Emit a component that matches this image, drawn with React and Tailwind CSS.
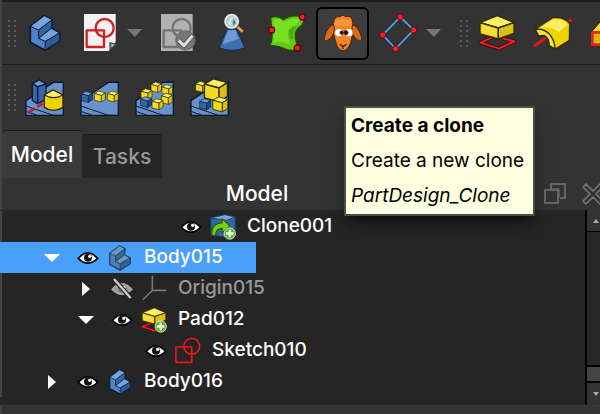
import { useState } from "react";

const iconProps = {
  viewBox: "0 0 120 120",
  className: "size-10 overflow-visible",
  strokeLinejoin: "round",
  "aria-hidden": true,
};

const Grip = () => (
  <div className="grid w-2 shrink-0 grid-cols-2 gap-x-1 gap-y-[3px]">
    {Array.from({ length: 12 }, (_, i) => (
      <span key={i} className="size-[2px] rounded-full bg-[#6a6a6a]" />
    ))}
  </div>
);

const BodyIcon = ({ small, muted }) => (
  <svg
    {...iconProps}
    className={small ? "size-7" : "size-10"}
    stroke={muted ? "#1d3a5c" : "#0b1a30"}
    strokeWidth="5"
  >
    <path d="M16 40L58 8L82 20L79 46L104 60V84L60 112L16 88Z" fill={muted ? "#4d7fb5" : "#4d84c6"} />
    <path d="M16 40L58 8L82 20L41 51Z" fill={muted ? "#6a95c0" : "#74a5de"} strokeWidth="3" />
    <path d="M41 51L82 20L79 46L41 76Z" fill={muted ? "#3b6898" : "#3465a4"} strokeWidth="3" />
    <path d="M41 76L79 46L104 60L61 85Z" fill={muted ? "#6a95c0" : "#74a5de"} strokeWidth="3" />
    <path d="M61 85L104 60V84L60 112Z" fill={muted ? "#35618f" : "#2f5c98"} strokeWidth="3" />
  </svg>
);

const SketchIcon = () => (
  <svg {...iconProps}>
    <path d="M12 3H107V86L86 114H12Z" fill="#f3f3f2" />
    <path d="M88 86L111 93L88 112Z" fill="#55574f" />
    <path d="M94 92L103 95L94 103Z" fill="#c5c7be" />
    <g fill="none" stroke="#da1c20" strokeWidth="7">
      <rect x="20" y="52" width="52" height="50" />
      <circle cx="74" cy="45" r="27" />
    </g>
  </svg>
);

const ValidateIcon = () => (
  <svg {...iconProps}>
    <path d="M12 3H107V114H12Z" fill="#b1b1b1" />
    <g fill="none" stroke="#747474" strokeWidth="7">
      <rect x="20" y="52" width="52" height="50" />
      <circle cx="74" cy="45" r="27" />
    </g>
    <circle cx="85" cy="82" r="29" fill="#777" stroke="#686868" strokeWidth="3" />
    <path d="M65 82L81 98L106 68" fill="none" stroke="#555" strokeWidth="15" />
    <path d="M65 82L81 98L106 68" fill="none" stroke="#ddd" strokeWidth="9" />
  </svg>
);

const CheckGeometryIcon = () => (
  <svg {...iconProps}>
    <path d="M45 48H74L99 105Q60 119 21 105Z" fill="#3e70b2" stroke="#17315a" strokeWidth="4" />
    <path d="M49 52H70L80 77Q54 85 32 94Z" fill="#6f9cd3" />
    <path d="M76 42L92 57" stroke="#be7a25" strokeWidth="9" />
    <path d="M78 42L92 55" stroke="#efb64c" strokeWidth="5" />
    <circle cx="59" cy="25" r="20" fill="#b6cfd4" stroke="#e7eaea" strokeWidth="5" />
    <path d="M49 30Q51 10 67 13Q51 23 57 40Z" fill="#e3eee9" />
    <path d="M64 18L72 30L64 38Q59 29 64 18Z" fill="#568b5e" />
  </svg>
);

const BinderIcon = () => (
  <svg {...iconProps}>
    <path
      d="M11 14Q32 6 50 20Q70 4 106 10Q118 29 96 44Q75 59 94 104Q80 119 56 108Q32 96 9 98Q18 77 14 52Z"
      fill="#62c915"
      stroke="#204d08"
      strokeWidth="4"
    />
    <path d="M20 20Q37 13 52 27Q76 12 98 18Q95 32 79 42Q53 57 71 96Q42 81 20 89Z" fill="#78e022" />
    <path d="M65 52Q76 37 90 38Q76 49 79 80Q62 76 65 52Z" fill="#4fac10" />
    <g fill="#ee2028" stroke="#690607" strokeWidth="4">
      <circle cx="106" cy="12" r="9" />
      <circle cx="14" cy="51" r="9" />
      <circle cx="91" cy="105" r="9" />
    </g>
  </svg>
);

const CloneSheepIcon = () => (
  <svg {...iconProps} stroke="#4c210b" strokeWidth="3">
    <path d="M34 34Q14 38 5 70Q1 85 12 83Q29 74 36 50Z" fill="#d9691c" />
    <path d="M86 34Q105 37 115 70Q119 86 108 83Q91 76 84 50Z" fill="#d9691c" />
    <path
      d="M34 20Q39 8 49 11Q60 3 70 11Q84 7 88 22Q92 32 87 43Q91 66 84 86Q76 111 61 113Q44 113 38 86Q29 64 34 45Q27 31 34 20Z"
      fill="#f58426"
    />
    <path d="M37 42Q32 28 42 21Q51 24 59 17Q75 23 83 20Q87 32 82 43Q60 33 37 42Z" fill="#fa9438" stroke="none" />
    <circle cx="48" cy="59" r="13" fill="#fff" stroke="#dc7929" />
    <circle cx="77" cy="59" r="13" fill="#fff" stroke="#dc7929" />
    <circle cx="56" cy="59" r="5" fill="#000" />
    <circle cx="69" cy="59" r="6" fill="#000" />
    <path d="M50 94L60 101L70 94M60 101V108" fill="none" strokeWidth="4" />
  </svg>
);

const DatumIcon = () => (
  <svg {...iconProps}>
    <path d="M67 12L107 51L53 107L14 66Z" fill="none" stroke="#132540" strokeWidth="11" />
    <path d="M67 12L107 51L53 107L14 66Z" fill="none" stroke="#6594cd" strokeWidth="6" />
    <g fill="#f12428" stroke="#750609" strokeWidth="3">
      <circle cx="67" cy="12" r="9" />
      <circle cx="107" cy="51" r="9" />
      <circle cx="53" cy="107" r="9" />
      <circle cx="14" cy="66" r="9" />
    </g>
  </svg>
);

const PadShape = () => (
  <g>
    <path d="M10 89L54 70L112 85L66 107Z" fill="none" stroke="#490307" strokeWidth="11" />
    <path d="M10 89L54 70L112 85L66 107Z" fill="none" stroke="#e62229" strokeWidth="6" />
    <g stroke="#302b08" strokeWidth="4">
      <path d="M9 29L61 8L111 29L64 45Z" fill="#fdee62" />
      <path d="M9 29L64 45V78L9 63Z" fill="#edd400" />
      <path d="M64 45L111 29V61L64 78Z" fill="#dcc115" />
    </g>
    <path d="M14 35L59 49V71L14 59Z" fill="#f4df35" />
  </g>
);

const PadIcon = () => (
  <svg {...iconProps}>
    <PadShape />
  </svg>
);

const RevolutionIcon = () => (
  <svg {...iconProps}>
    <path d="M8 98L116 21" stroke="#d8161e" strokeWidth="9" strokeLinecap="round" />
    <g stroke="#342d05" strokeWidth="4">
      <path d="M10 48L62 14Q98 10 113 32L112 82L70 108L52 98Q51 73 36 67L20 69Z" fill="#edd400" />
      <path d="M10 48Q62 46 70 108L52 98Q51 73 36 67L20 69Z" fill="#f7e640" />
    </g>
    <path d="M25 44L65 19Q94 16 107 35L80 58Q62 40 25 44Z" fill="#fcec65" />
  </svg>
);

const LoftIcon = () => (
  <svg {...iconProps}>
    <path d="M14 55L55 8H110V88L50 95Z" fill="#f4dc25" stroke="#302b08" strokeWidth="4" />
    <rect x="16" y="58" width="42" height="37" fill="#d7b90b" stroke="#e71e25" strokeWidth="8" />
  </svg>
);

// size is the width of the front face
const Cube = ({ x, y, size = 20, blue }) => (
  <svg x={x} y={y} width={size * 1.6} height={size * 1.6} viewBox="0 0 32 32" overflow="visible">
    <g stroke={blue ? "#0b1c36" : "#302b08"} strokeWidth="1.8" strokeLinejoin="round">
      <path d="M1 8L13 1L31 6L20 13Z" fill={blue ? "#729fcf" : "#fff06b"} />
      <path d="M1 8L20 13V31L1 26Z" fill={blue ? "#3465a4" : "#f3dc1e"} />
      <path d="M20 13L31 6V24L20 31Z" fill={blue ? "#204a87" : "#dcbf10"} />
    </g>
  </svg>
);

const Slab = () => (
  <g stroke="#0b1a2e" strokeWidth="4">
    <path d="M6 112V68L88 13L118 12V112Z" fill="#6792cb" />
    <path d="M6 84L88 112H118" fill="none" strokeWidth="3" />
    <path d="M8 101L38 111" strokeWidth="3" />
  </g>
);

const MirrorIcon = () => (
  <svg {...iconProps}>
    <Slab />
    <path d="M15 102L116 40" stroke="#d6162a" strokeWidth="8" strokeDasharray="19 10" />
    <g stroke="#0b1c36" strokeWidth="4">
      <path d="M25 17L46 6L66 18V65L40 77L25 67Z" fill="#3465a4" />
      <path d="M25 17L46 6L66 18L41 26Z" fill="#729fcf" />
      <path d="M41 26V76" />
    </g>
    <g stroke="#302b08" strokeWidth="4">
      <path d="M61 51L87 36L117 51V88Q89 106 61 88Z" fill="#edd400" />
      <path d="M61 51L87 36L117 51Q89 67 61 51Z" fill="#fff06b" />
    </g>
  </svg>
);

const LinearPatternIcon = () => (
  <svg {...iconProps}>
    <Slab />
    <Cube x="6" y="39" size={22} blue />
    <Cube x="45" y="38" size={22} />
    <Cube x="84" y="38" size={22} />
  </svg>
);

const PolarPatternIcon = () => (
  <svg {...iconProps}>
    <Slab />
    <Cube x="50" y="11" size={21} />
    <Cube x="83" y="19" size={21} />
    <Cube x="20" y="31" size={22} />
    <Cube x="81" y="45" size={22} />
    <Cube x="19" y="55" size={22} blue />
    <Cube x="53" y="61" size={22} />
  </svg>
);

const MultiTransformIcon = () => (
  <svg {...iconProps}>
    <Slab />
    <Cube x="19" y="9" size={22} />
    <Cube x="44" y="0" size={46} />
    <Cube x="31" y="61" size={22} blue />
    <Cube x="70" y="55" size={30} />
  </svg>
);

const Plus = () => (
  <g>
    <circle cx="89" cy="88" r="24" fill="#58b626" stroke="#dcf5ca" strokeWidth="4" />
    <path d="M89 72V104M73 88H105" stroke="#fff" strokeWidth="10" />
  </g>
);

const CloneTreeIcon = () => (
  <svg {...iconProps} className="size-7">
    <g stroke="#1b3d6c" strokeWidth="4">
      <path d="M8 21L68 7L112 17V91L77 105L8 94Z" fill="#3567a8" />
      <path d="M8 21L68 7L112 17L76 32Z" fill="#79a7dc" />
    </g>
    <path
      d="M13 96Q7 45 56 42V24L90 56L56 85V66Q31 66 28 95Z"
      fill="#73d216"
      stroke="#27580a"
      strokeWidth="5"
    />
    <Plus />
  </svg>
);

const PadTreeIcon = () => (
  <svg {...iconProps} className="size-7">
    <PadShape />
    <Plus />
  </svg>
);

const SketchTreeIcon = () => (
  <svg {...iconProps} className="size-7" fill="none" stroke="#f0161b" strokeWidth="7">
    <rect x="8" y="43" width="68" height="66" />
    <circle cx="76" cy="40" r="34" />
  </svg>
);

const OriginIcon = () => (
  <svg {...iconProps} className="size-7" fill="none" stroke="#777" strokeWidth="7">
    <path d="M53 3V66H113M53 66L12 106" />
  </svg>
);

const Eye = ({ hidden }) => (
  <svg viewBox="0 0 60 42" className="h-3.5 w-5 overflow-visible" aria-hidden="true">
    <path
      d="M1 22Q29 -11 59 22Q29 51 1 22Z"
      fill={hidden ? "#999" : "#fff"}
      stroke={hidden ? "#aaa" : "#000"}
      strokeWidth="5"
    />
    <circle cx="30" cy="20" r="12" fill={hidden ? "#777" : "#101010"} />
    <circle cx="35" cy="16" r="5" fill="#fff" />
    {hidden && (
      <>
        <path d="M6 -9L56 48" stroke="#222" strokeWidth="14" />
        <path d="M6 -9L56 48" stroke="#ccc" strokeWidth="7" />
      </>
    )}
  </svg>
);

const DropArrow = ({ label }) => (
  <button type="button" aria-label={label} className="shrink-0">
    <svg viewBox="0 0 15 8" className="h-2 w-[15px]">
      <path d="M0 0H15L8 8Z" fill="#777" />
    </svg>
  </button>
);

const ToolButton = ({ label, children }) => (
  <button type="button" aria-label={label} className="size-10 shrink-0">
    {children}
  </button>
);

const indent = ["pl-[42px]", "pl-[76px]", "pl-[110px]", "pl-[145px]"];

const rows = [
  { name: "Clone001", level: 3, icon: <CloneTreeIcon /> },
  { name: "Body015", level: 0, icon: <BodyIcon small muted />, open: true },
  { name: "Origin015", level: 1, icon: <OriginIcon />, open: false, hidden: true },
  { name: "Pad012", level: 1, icon: <PadTreeIcon />, open: true },
  { name: "Sketch010", level: 2, icon: <SketchTreeIcon /> },
  { name: "Body016", level: 0, icon: <BodyIcon small />, open: false },
];

const TreeRow = ({ row, selected, onSelect }) => (
  <li role="treeitem" aria-selected={selected} aria-expanded={row.open}>
    <button
      type="button"
      onClick={onSelect}
      className={`flex h-[31px] min-w-64 items-center border-l-2 whitespace-nowrap ${indent[row.level]} ${
        selected ? "border-[#4a9ffb] bg-[#4a9ffb]" : "border-[#444]"
      }`}
    >
      <span className="flex w-[34px] items-center">
        {row.open !== undefined && (
          <svg viewBox="0 0 16 16" className="size-4" fill="#fff" aria-hidden="true">
            {row.open ? <path d="M0 4H16L8 12Z" /> : <path d="M4 1L12 8L4 15Z" />}
          </svg>
        )}
      </span>
      <Eye hidden={row.hidden} />
      <span className="mr-2.5 ml-2">{row.icon}</span>
      <span className={row.hidden ? "text-[#999]" : "text-white"}>{row.name}</span>
    </button>
  </li>
);

const App = () => {
  const [tab, setTab] = useState("Model");
  const [selected, setSelected] = useState("Body015");

  return (
    <div className="relative flex min-h-screen flex-col overflow-hidden bg-[#333] font-['Inter','Liberation_Sans',sans-serif] font-medium text-white">
      <div className="border-l-2 border-[#444]">
        <div className="flex h-[65px] items-center border-t-2 border-b border-t-[#1c1c1c] border-b-[#1c1c1c] pl-1.5">
          <Grip />
          <div className="ml-[9px] flex items-center gap-[15px]">
            <ToolButton label="Create body">
              <BodyIcon />
            </ToolButton>
            <div className="flex items-center gap-[7px]">
              <ToolButton label="Create sketch">
                <SketchIcon />
              </ToolButton>
              <DropArrow label="Sketch options" />
            </div>
            <ToolButton label="Validate sketch">
              <ValidateIcon />
            </ToolButton>
            <ToolButton label="Check geometry">
              <CheckGeometryIcon />
            </ToolButton>
            <ToolButton label="Create shape binder">
              <BinderIcon />
            </ToolButton>
            <button
              type="button"
              aria-label="Create a clone"
              aria-describedby="clone-tip"
              className="-mx-1.5 flex size-[53px] shrink-0 items-center justify-center rounded-md border-2 border-black bg-[#3d3d3d]"
            >
              <CloneSheepIcon />
            </button>
            <div className="flex items-center gap-2">
              <ToolButton label="Create datum plane">
                <DatumIcon />
              </ToolButton>
              <DropArrow label="Datum options" />
            </div>
          </div>
          <div className="ml-[19px] flex items-center">
            <Grip />
            <div className="ml-[9px] flex items-center gap-[15px]">
              <ToolButton label="Pad">
                <PadIcon />
              </ToolButton>
              <ToolButton label="Revolution">
                <RevolutionIcon />
              </ToolButton>
              <ToolButton label="Additive loft">
                <LoftIcon />
              </ToolButton>
            </div>
          </div>
        </div>

        <div className="flex h-[65px] items-center pl-1.5">
          <Grip />
          <div className="ml-2 flex items-center gap-[15px]">
            <ToolButton label="Mirrored">
              <MirrorIcon />
            </ToolButton>
            <ToolButton label="Linear pattern">
              <LinearPatternIcon />
            </ToolButton>
            <ToolButton label="Polar pattern">
              <PolarPatternIcon />
            </ToolButton>
            <ToolButton label="Multi transform">
              <MultiTransformIcon />
            </ToolButton>
          </div>
        </div>

        <div role="tablist" className="flex h-12 items-stretch text-[21px]">
          {["Model", "Tasks"].map((name) => (
            <button
              key={name}
              type="button"
              role="tab"
              aria-selected={tab === name}
              onClick={() => setTab(name)}
              className={`w-20 rounded-t border-t ${
                tab === name
                  ? "border-[#1c1c1c] bg-[#3b3b3b] text-white"
                  : "mt-1 border-[#1c1c1c] bg-[#252525] text-[#999]"
              }`}
            >
              {name}
            </button>
          ))}
        </div>

        <div className="flex h-8 items-center text-[21px]">
          <h2 className="min-w-0 flex-1 pr-8 text-center">{tab}</h2>
          <div className="-mr-1 flex items-center gap-4">
            <button type="button" aria-label="Float panel">
              <svg viewBox="0 0 22 22" className="size-[22px]" fill="none" stroke="#777" strokeWidth="1.5">
                <path d="M7 6V1H21V15H16" />
                <rect x="1" y="7" width="13" height="13" />
                <path d="M7 6H15V14" stroke="#666" />
              </svg>
            </button>
            <button type="button" aria-label="Close panel">
              <svg viewBox="0 0 22 22" className="size-[22px]" fill="none" stroke="#777" strokeWidth="1.5">
                <path d="M1 4L4 1L11 8L18 1L21 4L14 11L21 18L18 21L11 14L4 21L1 18L8 11Z" />
              </svg>
            </button>
          </div>
        </div>
      </div>

      <div className="flex flex-1 bg-[#252525]">
        <ul role="tree" className="flex-1 pt-px text-[19px]">
          {rows.map((row) => (
            <TreeRow
              key={row.name}
              row={row}
              selected={selected === row.name}
              onSelect={() => setSelected(row.name)}
            />
          ))}
        </ul>
        <div className="flex w-[15px] flex-col border-l-2 border-black bg-[#282828]">
          <div className="flex h-[22px] items-center justify-end border-b border-black bg-[#333] pr-px">
            <svg viewBox="0 0 6 4" className="h-1 w-1.5">
              <path d="M0 4L3 0L6 4Z" fill="#aaa" />
            </svg>
          </div>
          <div className="flex-1" />
          <div className="h-[18px] border-y-2 border-black bg-[#444]" />
          <div className="flex h-[22px] items-center justify-end bg-[#333] pr-px">
            <svg viewBox="0 0 6 4" className="h-1 w-1.5">
              <path d="M0 0H6L3 4Z" fill="#aaa" />
            </svg>
          </div>
        </div>
      </div>
      <div className="h-[9px] border-t border-l-2 border-t-[#3b3b3b] border-l-[#444]" />

      <div
        id="clone-tip"
        role="tooltip"
        className="absolute top-[106px] left-[344px] border-2 border-[#4b4c43] bg-[#ffffe1] px-[5px] pb-px text-[19px] leading-[35px] font-normal whitespace-nowrap text-black shadow-lg shadow-black/50"
      >
        <p className="font-bold">Create a clone</p>
        <p className="pr-1">Create a new clone</p>
        <p className="italic">PartDesign_Clone</p>
      </div>
    </div>
  );
};

export default App;
